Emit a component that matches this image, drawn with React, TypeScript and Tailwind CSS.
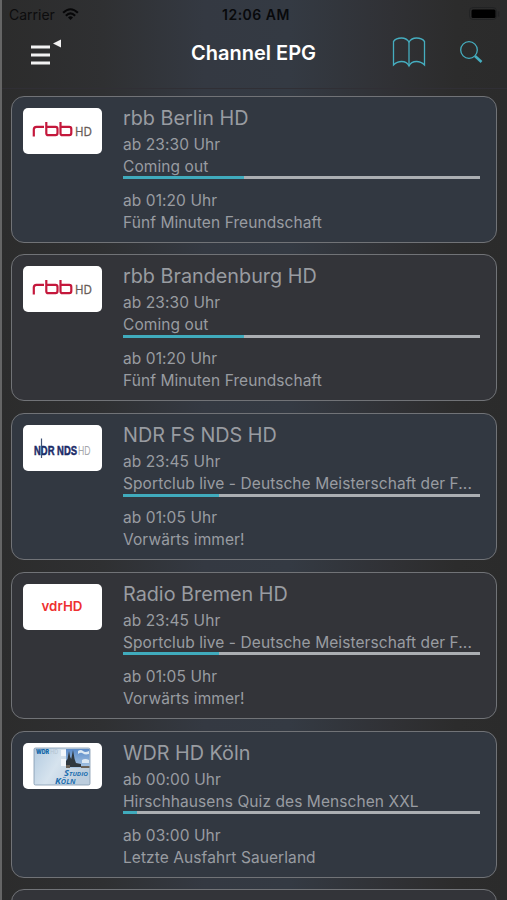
import React from "react";

type Channel = {
  name: string;
  logo: "rbb" | "ndr" | "vdr" | "wdr";
  now: { time: string; title: string };
  next: { time: string; title: string };
  progress: number;
};

const channels: Channel[] = [
  {
    name: "rbb Berlin HD",
    logo: "rbb",
    now: { time: "ab 23:30 Uhr", title: "Coming out" },
    next: { time: "ab 01:20 Uhr", title: "Fünf Minuten Freundschaft" },
    progress: 34,
  },
  {
    name: "rbb Brandenburg HD",
    logo: "rbb",
    now: { time: "ab 23:30 Uhr", title: "Coming out" },
    next: { time: "ab 01:20 Uhr", title: "Fünf Minuten Freundschaft" },
    progress: 34,
  },
  {
    name: "NDR FS NDS HD",
    logo: "ndr",
    now: { time: "ab 23:45 Uhr", title: "Sportclub live - Deutsche Meisterschaft der F..." },
    next: { time: "ab 01:05 Uhr", title: "Vorwärts immer!" },
    progress: 27,
  },
  {
    name: "Radio Bremen HD",
    logo: "vdr",
    now: { time: "ab 23:45 Uhr", title: "Sportclub live - Deutsche Meisterschaft der F..." },
    next: { time: "ab 01:05 Uhr", title: "Vorwärts immer!" },
    progress: 27,
  },
  {
    name: "WDR HD Köln",
    logo: "wdr",
    now: { time: "ab 00:00 Uhr", title: "Hirschhausens Quiz des Menschen XXL" },
    next: { time: "ab 03:00 Uhr", title: "Letzte Ausfahrt Sauerland" },
    progress: 4,
  },
];

function RbbLogo() {
  return (
    <svg viewBox="0 0 79 46" className="h-full w-full">
      <g fill="none" stroke="#c4183c" strokeWidth="2.200">
        <path d="M10.800 28.500V21.500Q10.800 18.800 13.500 18.800H21" />
        <path d="M23.300 14V25.200Q23.300 27.200 25.300 27.200H32.500Q34.500 27.200 34.500 25V21Q34.500 18.800 32.500 18.800H23.300" />
        <path d="M37.500 14V25.200Q37.500 27.200 39.500 27.200H46.300Q48.300 27.200 48.300 25V21Q48.300 18.800 46.300 18.800H37.500" />
      </g>
      <text x="52" y="28" fontSize="13" fontWeight="500" textLength="17" lengthAdjust="spacingAndGlyphs" fill="#675b57" stroke="#675b57" strokeWidth="0.300" fontFamily="Open Sans, sans-serif">HD</text>
    </svg>
  );
}

function NdrLogo() {
  return (
    <svg viewBox="0 0 79 46" className="h-full w-full">
      <text x="11" y="29.500" fontFamily="Liberation Sans, sans-serif" fontSize="12.500" fontWeight="700" textLength="43" lengthAdjust="spacingAndGlyphs" fill="#1b2b68" stroke="#1b2b68" strokeWidth="0.500">NDR NDS</text>
      <text x="55" y="29.500" fontFamily="Liberation Sans, sans-serif" fontSize="12.500" textLength="12.500" lengthAdjust="spacingAndGlyphs" fill="#a5a7ab">HD</text>
      <path d="M18.500 13.500V33" stroke="#3e5276" strokeWidth="1.200" />
    </svg>
  );
}

function WdrLogo() {
  return (
    <svg viewBox="0 0 79 46" className="h-full w-full">
      <defs>
        <linearGradient id="plate" x1="0" x2="1" y1="0" y2="0.400">
          <stop offset="0" stopColor="#b3cbe0" />
          <stop offset="0.500" stopColor="#d6e3ee" />
          <stop offset="1" stopColor="#bccddd" />
        </linearGradient>
        <linearGradient id="sky" x1="0" x2="0" y1="0" y2="1">
          <stop offset="0" stopColor="#5a8ac8" />
          <stop offset="1" stopColor="#a9c6e4" />
        </linearGradient>
      </defs>
      <rect x="11" y="5" width="56" height="37" rx="1.500" fill="url(#plate)" stroke="#8297ad" strokeWidth="0.800" />
      <rect x="43" y="6" width="23.500" height="19" fill="url(#sky)" />
      <path d="M38 7h5v6h-5zM38 16h5v7h-5z" fill="#f3f7fb" />
      <path d="M55 8q3-2 5 0t6 0v3q-4 1-6-0.500t-5 0.500zM59 17q3-2 7 0v3h-7z" fill="#dce8f3" />
      <path d="M43 24V18l1.500-2 1.500-8 1.200 6 1 2 1.800-9 1.600 9 1.400 4 5 1v3z" fill="#30383f" />
      <path d="M43 22h4v3h-4zM58 23h8.500v2H58z" fill="#6a6258" />
      <text x="13" y="11" fontFamily="Inter, sans-serif" fontWeight="900" fontSize="6" textLength="22" lengthAdjust="spacingAndGlyphs" fill="#1267a8">
        WDR <tspan fontWeight="400" fill="#b3c3cf">HD</tspan>
      </text>
      <g fontFamily="Open Sans, sans-serif" fontStyle="italic" fontWeight="700" fill="#2370b0">
        <text x="41" y="32.500" fontSize="8.500" textLength="24" lengthAdjust="spacingAndGlyphs">
          S<tspan fontSize="5.800">TUDIO</tspan>
        </text>
        <text x="32" y="40.500" fontSize="8.500" textLength="20.500" lengthAdjust="spacingAndGlyphs">
          K<tspan fontSize="6.500">ÖLN</tspan>
        </text>
      </g>
    </svg>
  );
}

function Logo({ kind }: { kind: Channel["logo"] }) {
  return (
    <div className="mt-[11px] flex h-[46px] w-[79px] shrink-0 items-center justify-center overflow-hidden rounded-[5px] bg-white">
      {kind === "rbb" && <RbbLogo />}
      {kind === "ndr" && <NdrLogo />}
      {kind === "wdr" && <WdrLogo />}
      {kind === "vdr" && <span className="text-[13.300px] font-semibold text-[#ee3030]">vdrHD</span>}
    </div>
  );
}

function ChannelCard({ channel, blue }: { channel: Channel; blue: boolean }) {
  return (
    <li
      className={`flex h-[147px] shrink-0 rounded-[13px] border-[1.500px] border-[#717377] pl-[11px] pr-[16px] ${
        blue ? "bg-[#323841]" : "bg-[#333439]"
      }`}
    >
      <Logo kind={channel.logo} />
      <div className="ml-[21.500px] mt-[9px] min-w-0 flex-1 whitespace-nowrap text-[15.500px] leading-[22px] tracking-[0.080px] text-[#999ca1]">
        <h2 className="mb-[4px] text-[19.800px] leading-[24px] tracking-normal">{channel.name}</h2>
        <p>{channel.now.time}</p>
        <p>{channel.now.title}</p>
        <div className="-mt-[1.500px] h-[3px] bg-[#abaeb2]">
          <div className="h-full bg-[#40abbd]" style={{ width: `${channel.progress}%` }} />
        </div>
        <p className="mt-[10.500px]">{channel.next.time}</p>
        <p>{channel.next.title}</p>
      </div>
    </li>
  );
}

export default function App() {
  return (
    <div className="flex h-[900px] w-[507px] flex-col overflow-hidden border-l-2 border-[#656565] bg-[linear-gradient(90deg,#2c2c2c_0%,#2f3032_20%,#343942_40%,#343a43_57%,#303135_77%,#2c2c2c_90%,#2b2b2b_100%)] font-['Inter','Liberation_Sans',sans-serif]">
      <div className="grid h-[28px] shrink-0 grid-cols-3 items-center pl-[7px] pr-[7px] text-black">
        <div className="flex items-center gap-[7px] text-[14px] text-[#0c0c0d]">
          Carrier
          <svg viewBox="0 0 18 13" className="h-[12px] w-[17px]">
            <g fill="none" stroke="#070708" strokeWidth="2.300">
              <path d="M1 5.200Q9-2.500 17 5.200" />
              <path d="M4 8.300Q9 3.500 14 8.300" />
            </g>
            <path d="M9 13 6.300 10.200Q9 7.800 11.700 10.200Z" fill="#070708" />
          </svg>
        </div>
        <div className="pl-[3px] text-center text-[14px] font-semibold tracking-[0.500px] text-[#08090b]">12:06 AM</div>
        <svg viewBox="0 0 31 14" className="h-[14px] w-[31px] justify-self-end">
          <rect x="0.500" y="0.500" width="27" height="12" rx="3.500" fill="none" stroke="#222324" />
          <rect x="2.500" y="2.500" width="24" height="8.500" rx="1.500" fill="#000" />
          <path d="M29.500 4.500v5" stroke="#222324" strokeWidth="1.500" />
        </svg>
      </div>

      <header className="flex h-[61px] shrink-0 items-center border-b border-[#302f35] pb-[11px] pl-[28px] pr-[24px]">
        <div className="w-[161px]">
          <svg viewBox="0 0 32 28" className="h-[28px] w-[32px]">
            <path d="M1 8h19M1 16h19M1 24h19" stroke="#f2f2f2" strokeWidth="3" />
            <path d="M23 4.500 31 0.500v8z" fill="#f2f2f2" />
          </svg>
        </div>
        <h1 className="whitespace-nowrap text-[20px] font-semibold text-white">Channel EPG</h1>
        <div className="flex flex-1 items-center justify-end">
          <svg viewBox="0 0 34 32" className="mr-[33px] h-[32px] w-[34px]" fill="none" stroke="#45adbf" strokeWidth="1.300">
            <path d="M17 5Q14.500 1 9.500 1Q4 1 1.500 4.500V28Q5 24.500 9.500 24.500Q15 24.500 17 29Q19 24.500 24.500 24.500Q29 24.500 32.500 28V4.500Q30 1 24.500 1Q19.500 1 17 5Z" />
            <path d="M17 5V29" />
          </svg>
          <svg viewBox="0 0 24 24" className="h-[24px] w-[24px]" fill="none" stroke="#45adbf">
            <circle cx="10" cy="9" r="8.300" strokeWidth="1.300" />
            <path d="m16 15 6.500 6" strokeWidth="2.600" />
          </svg>
        </div>
      </header>

      <ul className="flex flex-col gap-[11.800px] pl-[8.500px] pr-[10px] pt-[6.500px]">
        {channels.map((channel, i) => (
          <ChannelCard key={channel.name} channel={channel} blue={i % 2 === 0} />
        ))}
        <li className="h-[147px] shrink-0 rounded-[13px] border-[1.500px] border-[#717377] bg-[#333439]" />
      </ul>
    </div>
  );
}
